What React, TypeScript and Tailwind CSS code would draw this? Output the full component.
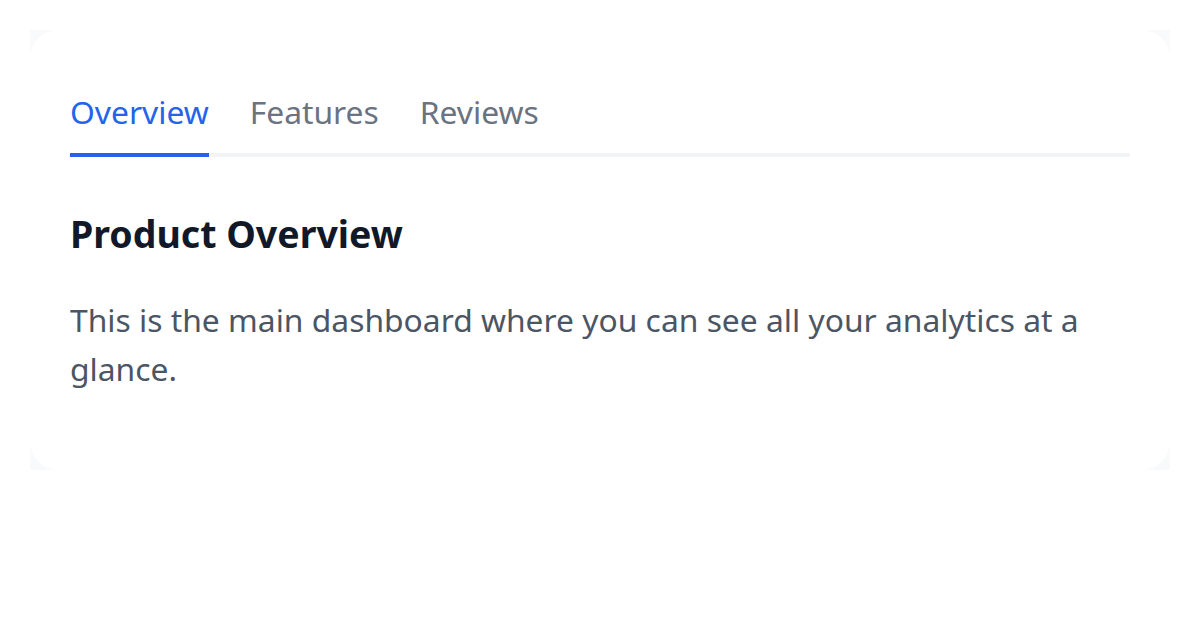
import React, { useState } from "react";

export default function App() {
  const [tab, setTab] = useState("Overview");
  const tabs = ["Overview", "Features", "Reviews"];
  return (
    <div
      className="w-[1200px] h-[630px] bg-white p-[30px]"
      style={{ fontFamily: '"Noto Sans", "Open Sans", sans-serif' }}
    >
      <div className="bg-[#f9fafb] w-[1140px] h-[440px]">
        <div className="bg-white rounded-[28px] w-full h-full px-[40px] pt-[40px]">
          <div className="flex gap-[41px] border-b-4 border-[#f3f4f6]">
            {tabs.map((t) => (
              <button
                key={t}
                onClick={() => setTab(t)}
                className={
                  "pt-[19px] pb-[19px] -mb-[4px] border-b-4 text-[31.8px] leading-[45px] " +
                  (tab === t
                    ? "border-[#2563eb] text-[#2563eb]"
                    : "border-transparent text-[#6b7280]")
                }
              >
                {t}
              </button>
            ))}
          </div>
          <h2 className="mt-[52px] text-[37.5px] leading-[50px] font-bold text-[#111827]">
            Product Overview
          </h2>
          <p className="mt-[36px] text-[31.8px] leading-[49px] text-[#4b5563]">
            This is the main dashboard where you can see all your analytics at a glance.
          </p>
        </div>
      </div>
    </div>
  );
}
